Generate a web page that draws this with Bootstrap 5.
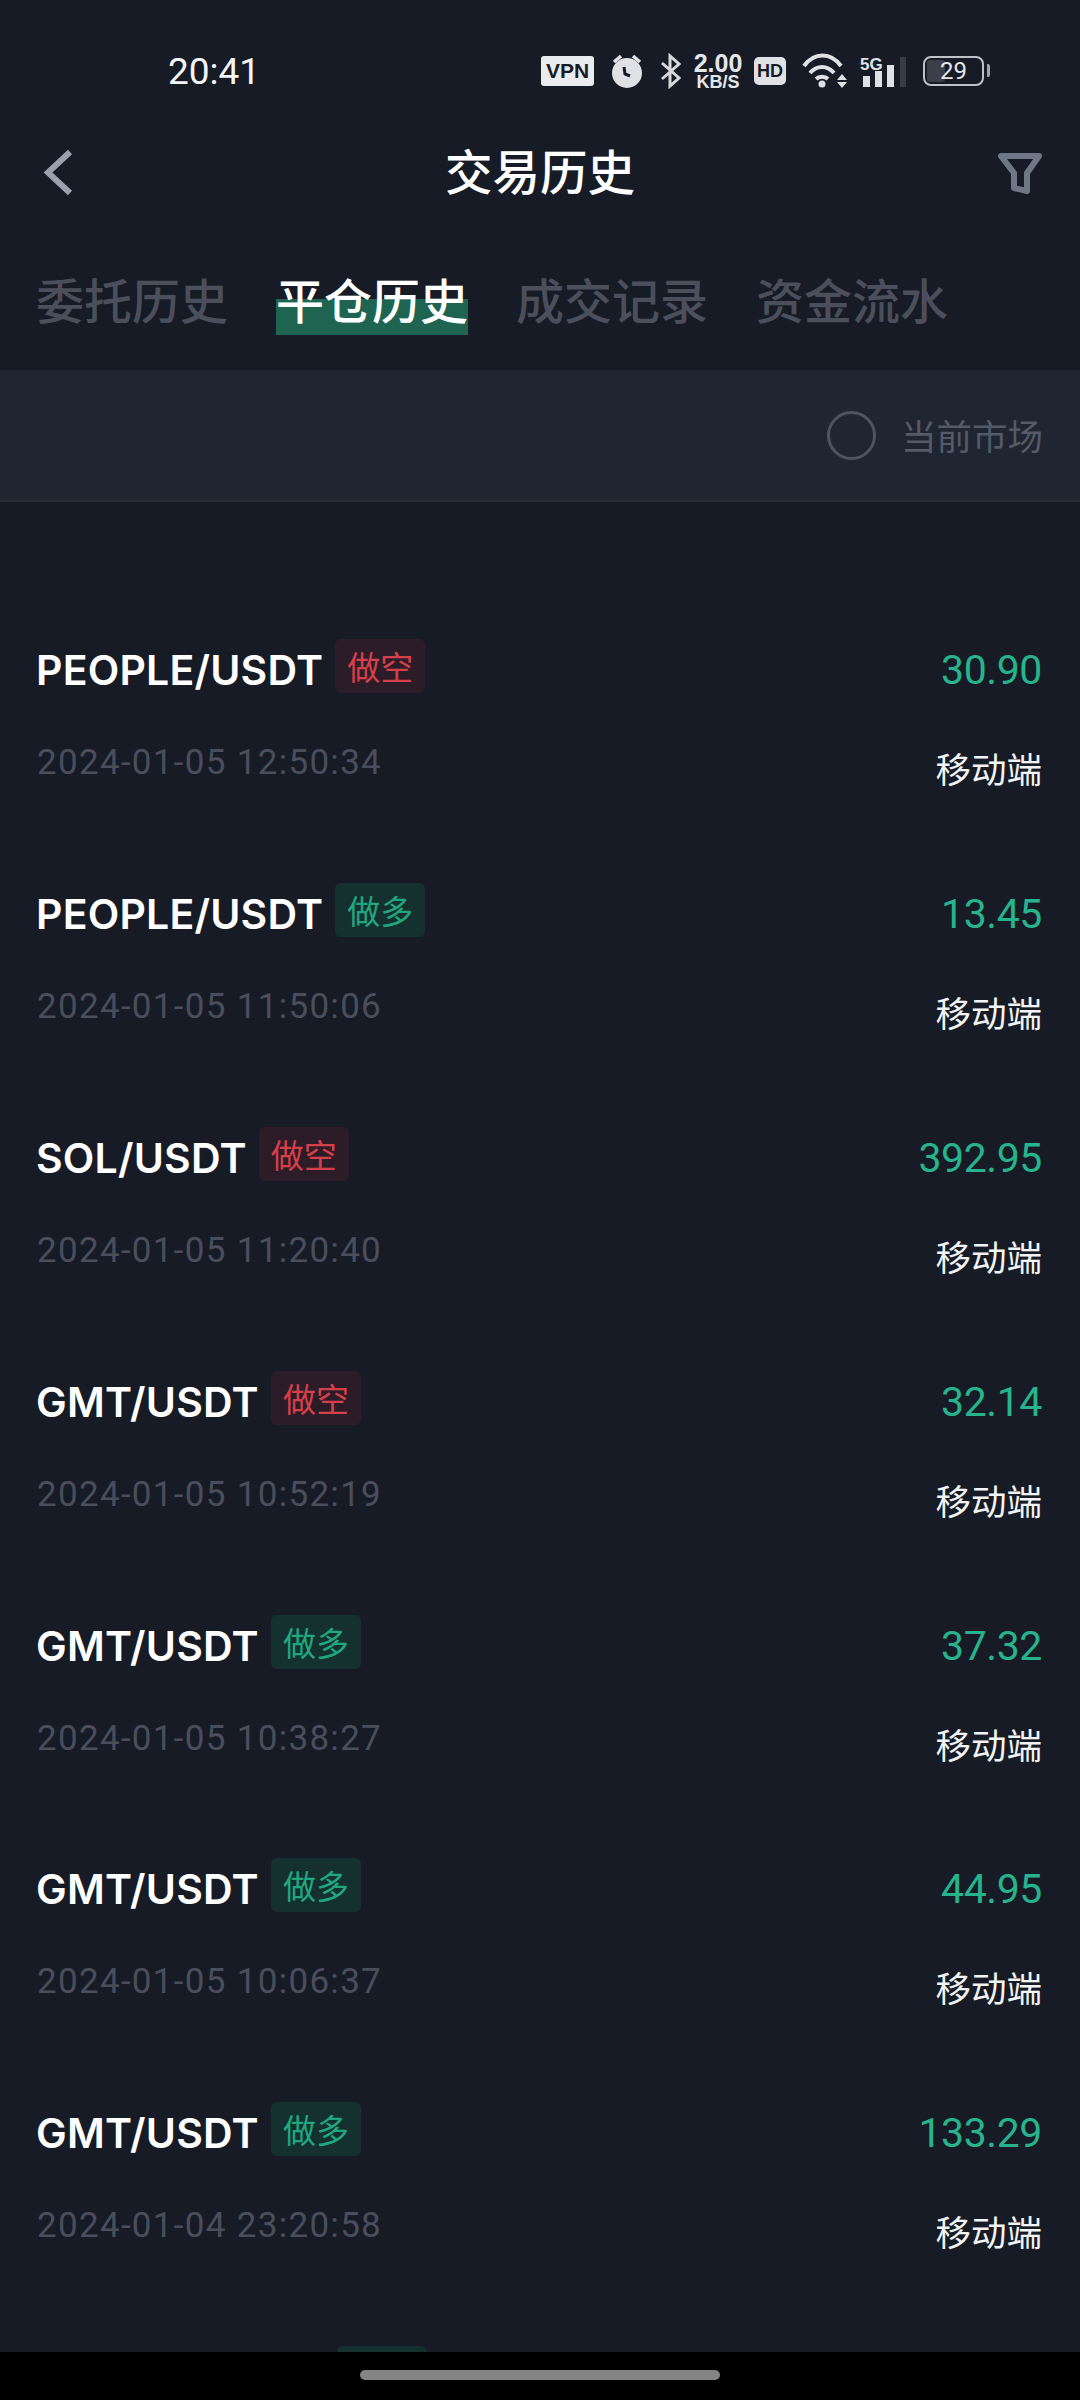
<!DOCTYPE html>
<html lang="zh">
<head>
  <meta charset="UTF-8" />
  <meta name="viewport" content="width=device-width, initial-scale=1.0" />
  <title>交易历史</title>
  <link href="https://cdn.jsdelivr.net/npm/bootstrap@5.3.2/dist/css/bootstrap.min.css" rel="stylesheet" />
  <style>
    html, body { height: 2400px; overflow: hidden; }
    body {
      background-color: #161b26;
      color: #fff;
      font-family: "Inter", "Noto Sans CJK SC", sans-serif;
    }
    .cjk { font-family: "Noto Sans CJK SC", sans-serif; }

    .status-row { height: 142px; padding: 0 91px 0 168px; }
    .clock { font-family: "Roboto", sans-serif; font-size: 37px; line-height: 1; color: #f4f5f6; }
    .status-icons { color: #e4e6ea; font-family: "Liberation Sans", sans-serif; }
    .status-icons > * { flex: none; }
    .vpn-tag { background: #e9ebee; color: #161b26; font-weight: 700; font-size: 21px; line-height: 30px; height: 30px; width: 53px; text-align: center; border-radius: 3px; }
    .alarm-icon { margin-left: 17px; }
    .bt-icon { margin-left: 15px; }
    .speed { margin-left: 11px; width: 50px; text-align: center; font-weight: 700; }
    .speed b { display: block; font-size: 25px; line-height: 21px; }
    .speed i { display: block; font-style: normal; font-size: 18px; line-height: 16px; }
    .hd-tag { margin-left: 11px; background: #dfe1e5; color: #161b26; font-weight: 700; font-size: 18px; line-height: 28px; height: 28px; width: 32px; text-align: center; border-radius: 5px; }
    .wifi-icon { margin-left: 16px; }
    .signal-icon { margin-left: 12px; }
    .battery { position: relative; margin-left: 17px; margin-right: 5px; width: 61px; height: 30px; border: 2px solid #bfc2c8; border-radius: 8px; font-family: "Roboto", sans-serif; font-size: 24px; line-height: 26px; text-align: center; }
    .battery-level { position: absolute; left: 2px; top: 2px; bottom: 2px; width: 18px; background: #3c3f49; border-radius: 3px; }
    .battery-num { position: relative; }
    .battery-tip { position: absolute; right: -8px; top: 6px; width: 3px; height: 13px; background: #9fa3aa; border-radius: 0 2px 2px 0; }

    .title-row { height: 62px; padding: 0 38px 0 42px; margin-bottom: 62px; position: relative; }
    .page-title { font-size: 47.5px; font-weight: 500; line-height: 56px; position: absolute; left: 0; right: 0; top: 0; text-align: center; }

    .tab-row { gap: 48px; padding-left: 36px; height: 104px; }
    .tab-item { font-size: 48px; line-height: 64px; height: 69px; font-weight: 500; color: #4b4f5b; white-space: nowrap; }
    .tab-item.is-on { color: #fff; background: linear-gradient(to bottom, transparent 33px, #1e6450 33px); }

    .filter-bar { height: 132px; background: #1f2531; padding-right: 37px; border-bottom: 2px solid #262b36; gap: 25px; }
    .ring { width: 49px; height: 49px; border: 3px solid #4e5361; border-radius: 50%; }
    .filter-label { font-size: 35.5px; color: #555a67; line-height: 48px; }

    .trade-list { padding: 0 38px 0 36px; margin-top: 139px; }
    .trade-row { height: 243.9px; }
    .row-top { height: 58px; }
    .row-bottom { margin-top: 34px; height: 60px; }
    .pair { font-size: 41px; font-weight: 600; line-height: 58px; letter-spacing: 0.2px; }
    .side-tag { font-size: 33px; line-height: 54px; height: 54px; width: 90px; text-align: center; border-radius: 6px; margin-left: 12px; margin-top: -2px; }
    .side-short { background: #2c1c28; color: #d43f49; }
    .side-long { background: #14302f; color: #21a77f; }
    .peek-tag { height: 54px; width: 90px; margin: -2px 0 0 301px; border-radius: 6px; background: #14302f; }
    .pnl { font-family: "Roboto", sans-serif; font-size: 41px; line-height: 58px; color: #27b48c; letter-spacing: -0.4px; }
    .stamp { font-family: "Roboto", sans-serif; font-size: 35px; line-height: 60px; color: #4a4e5c; letter-spacing: 1.3px; margin-left: 1px; }
    .source { font-size: 35.5px; line-height: 60px; color: #f2f3f5; margin-top: 5px; }

    .home-bar { position: absolute; left: 0; right: 0; top: 2352px; height: 48px; background: #000; }
    .home-pill { width: 360px; height: 10px; margin: 18px auto 0; background: #848484; border-radius: 5px; }
  </style>
</head>
<body>
  <div class="status-row d-flex justify-content-between align-items-center">
    <span class="clock">20:41</span>
    <div class="status-icons d-flex align-items-center">
      <span class="vpn-tag">VPN</span>
      <svg class="alarm-icon" width="34" height="36" viewBox="0 0 34 36"><circle cx="16" cy="20" r="15" fill="#dfe1e5"/><path d="M3 9 10 3M29 9 22 3" stroke="#dfe1e5" stroke-width="3.5"/><path d="M13 14l1 7 5 2" stroke="#161b26" stroke-width="3" fill="none"/></svg>
      <svg class="bt-icon" width="22" height="36" viewBox="0 0 22 36"><path d="M2 10 19 25 10 33V3l9 8L2 26" stroke="#d6d8dc" stroke-width="3" fill="none"/></svg>
      <span class="speed"><b>2.00</b><i>KB/S</i></span>
      <span class="hd-tag">HD</span>
      <svg class="wifi-icon" width="46" height="36" viewBox="0 0 46 36"><path d="M2 13C12 -1 29 -1 39 13M8 20C15 12 25 12 32 20M14 26C17 23 23 23 26 26" stroke="#dfe1e5" stroke-width="4" fill="none"/><circle cx="20" cy="31" r="3.5" fill="#dfe1e5"/><path d="M40 21l5 6H35zM35 29h10l-5 6z" fill="#dfe1e5"/></svg>
      <svg class="signal-icon" width="46" height="36" viewBox="0 0 46 36"><rect x="3" y="23" width="7" height="11" fill="#dfe1e5"/><rect x="15" y="18" width="7" height="16" fill="#dfe1e5"/><rect x="27" y="12" width="7" height="22" fill="#dfe1e5"/><rect x="40" y="4" width="6" height="30" fill="#383c46"/><text x="0" y="17" font-size="17" font-weight="700" fill="#dfe1e5" font-family="Liberation Sans">5G</text></svg>
      <span class="battery"><span class="battery-level"></span><span class="battery-num">29</span><span class="battery-tip"></span></span>
    </div>
  </div>

  <div class="title-row d-flex justify-content-between align-items-center">
    <span class="page-title cjk">交易历史</span>
    <svg class="position-relative" width="32" height="50" viewBox="0 0 32 50"><path d="M28 4 6 24.5 28 45" stroke="#9aa0ad" stroke-width="6" fill="none"/></svg>
    <svg class="position-relative" width="44" height="41" viewBox="0 0 44 41"><path d="M3 3H41L29 20V38L16 35V20Z" stroke="#6f7787" stroke-width="6" fill="none" stroke-linejoin="round"/></svg>
  </div>

  <div class="tab-row d-flex cjk">
    <span class="tab-item">委托历史</span>
    <span class="tab-item is-on">平仓历史</span>
    <span class="tab-item">成交记录</span>
    <span class="tab-item">资金流水</span>
  </div>

  <div class="filter-bar d-flex justify-content-end align-items-center cjk">
    <span class="ring"></span>
    <span class="filter-label">当前市场</span>
  </div>

  <div class="trade-list" id="trades"></div>

  <div class="home-bar"><div class="home-pill"></div></div>

  <script>
    const trades = [
      ["PEOPLE/USDT", "s", "30.90", "2024-01-05 12:50:34"],
      ["PEOPLE/USDT", "l", "13.45", "2024-01-05 11:50:06"],
      ["SOL/USDT", "s", "392.95", "2024-01-05 11:20:40"],
      ["GMT/USDT", "s", "32.14", "2024-01-05 10:52:19"],
      ["GMT/USDT", "l", "37.32", "2024-01-05 10:38:27"],
      ["GMT/USDT", "l", "44.95", "2024-01-05 10:06:37"],
      ["GMT/USDT", "l", "133.29", "2024-01-04 23:20:58"]
    ];
    // last row is hidden by the home bar, only the top of its tag shows
    document.getElementById("trades").innerHTML = trades.map(t => `
      <div class="trade-row">
        <div class="row-top d-flex justify-content-between">
          <div class="d-flex">
            <span class="pair">${t[0]}</span>
            <span class="side-tag cjk ${t[1] === "s" ? "side-short" : "side-long"}">${t[1] === "s" ? "做空" : "做多"}</span>
          </div>
          <span class="pnl">${t[2]}</span>
        </div>
        <div class="row-bottom d-flex justify-content-between">
          <span class="stamp">${t[3]}</span>
          <span class="source cjk">移动端</span>
        </div>
      </div>`).join("") + '<div class="peek-tag"></div>';
  </script>
  <script src="https://cdn.jsdelivr.net/npm/bootstrap@5.3.2/dist/js/bootstrap.bundle.min.js"></script>
</body>
</html>
